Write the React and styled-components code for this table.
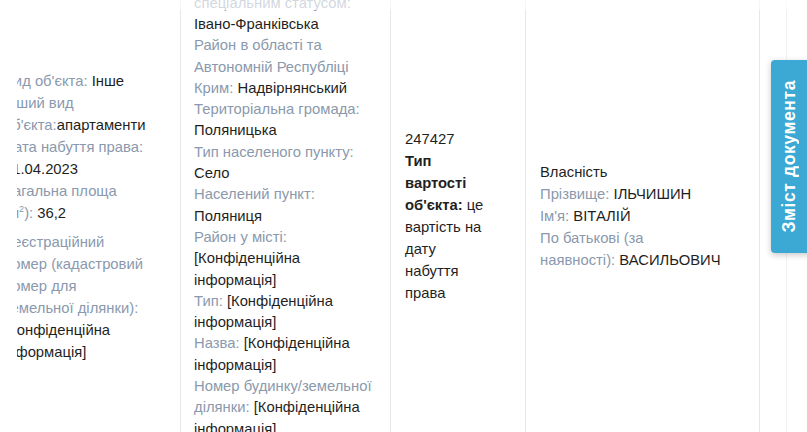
import React from 'react';
import styled, { createGlobalStyle } from 'styled-components';

const GlobalStyle = createGlobalStyle`
  html, body {
    margin: 0;
    padding: 0;
    background: #fff;
  }
  body {
    font-family: "Liberation Sans", Arial, sans-serif;
    color: #1f1f1f;
  }
`;

const Page = styled.div`
  position: relative;
  height: 432px;
  padding-left: 17px;
  display: flex;
  overflow: hidden;
  background: #fff;
`;

const Clip = styled.div`
  flex: 1;
  display: flex;
  justify-content: flex-end;
  align-items: center;
  padding-right: 20px;
  overflow: hidden;
`;

const Table = styled.div`
  flex-shrink: 0;
  display: grid;
  grid-template-columns: 190px 210px 135px 234px 27px;
  align-items: stretch;
`;

const Cell = styled.div`
  display: flex;
  flex-direction: column;
  justify-content: center;
  box-sizing: border-box;
  padding: ${p => p.$pad || '12px 13px'};
  border-right: 1px solid ${p => p.$line || '#e7e7e7'};
  font-size: 14.8px;
  line-height: ${p => p.$lh || '22px'};
`;

const Text = styled.div`
  width: ${p => p.$w}px;
`;

const Field = styled.div`
  margin-top: ${p => p.$gap || 0}px;
`;

const Label = styled.span`
  color: #8a99ad;
`;

const Value = styled.span`
  color: #1f1f1f;
`;

const Keep = styled.span`
  white-space: nowrap;
`;

const Strong = styled.b`
  font-weight: 700;
  color: #1f1f1f;
`;

const Sup = styled.sup`
  font-size: 9px;
  line-height: 0;
`;

const Fade = styled.div`
  position: absolute;
  top: 0;
  left: 0;
  right: 0;
  height: 10px;
  background: rgba(255, 255, 255, 0.62);
`;

const SideTab = styled.button`
  position: absolute;
  top: 60px;
  right: -6px;
  width: 42px;
  height: 193px;
  border: none;
  border-radius: 4px 0 0 4px;
  background: #3ba9d3;
  box-shadow: 0 2px 6px rgba(0, 0, 0, 0.22);
  color: #fff;
  font-family: "Liberation Sans", Arial, sans-serif;
  font-size: 17.5px;
  font-weight: 700;
  letter-spacing: 0.6px;
  padding: 0 6px 0 0;
  display: flex;
  align-items: center;
  justify-content: center;
  cursor: pointer;

  span {
    writing-mode: vertical-rl;
    transform: rotate(180deg);
    white-space: nowrap;
  }
`;

const confidential = '[Конфіденційна інформація]';

export default function App() {
  return (
    <>
      <GlobalStyle />
      <Page>
        <Clip>
          <Table>
            <Cell>
              <Text $w={141}>
                <Field><Label>Вид об'єкта:</Label> <Value>Інше</Value></Field>
                <Field><Label>Інший вид об'єкта:</Label><Value>апартаменти</Value></Field>
                <Field><Label>Дата набуття права:</Label> <Value>01.04.2023</Value></Field>
                <Field>
                  <Label>Загальна площа (м<Sup>2</Sup>):</Label> <Value>36,2</Value>
                </Field>
                <Field $gap={7}>
                  <Label>Реєстраційний номер (кадастровий номер для земельної ділянки):</Label>{' '}
                  <Value>{confidential}</Value>
                </Field>
              </Text>
            </Cell>

            <Cell $lh="21.3px" $pad="12px 13px 54px">
              <Text $w={183}>
                <Field>
                  <Label>Область/Автономна Республіка Крим/місто зі спеціальним статусом:</Label>{' '}
                  <Value>Івано-Франківська</Value>
                </Field>
                <Field>
                  <Label>Район в області та Автономній Республіці Крим:</Label>{' '}
                  <Value>Надвірнянський</Value>
                </Field>
                <Field><Label>Територіальна громада:</Label> <Value>Поляницька</Value></Field>
                <Field><Label>Тип населеного пункту:</Label> <Value>Село</Value></Field>
                <Field><Label>Населений пункт:</Label> <Value>Поляниця</Value></Field>
                <Field><Label>Район у місті:</Label> <Value>{confidential}</Value></Field>
                <Field><Label>Тип:</Label> <Value>{confidential}</Value></Field>
                <Field><Label>Назва:</Label> <Value>{confidential}</Value></Field>
                <Field>
                  <Label>Номер будинку/земельної ділянки:</Label> <Value>{confidential}</Value>
                </Field>
              </Text>
            </Cell>

            <Cell $pad="12px 14px">
              <Text $w={81}>
                <Field><Value>247427</Value></Field>
                <Field>
                  <Strong>Тип вартості об'єкта:</Strong> <Value>це вартість на дату набуття права</Value>
                </Field>
              </Text>
            </Cell>

            <Cell $pad="12px 14px">
              <Text $w={178}>
                <Field><Value>Власність</Value></Field>
                <Field><Label>Прізвище:</Label> <Value>ІЛЬЧИШИН</Value></Field>
                <Field><Label>Ім'я:</Label> <Value>ВІТАЛІЙ</Value></Field>
                <Field>
                  <Label>По батькові (за</Label>{' '}
                  <Keep><Label>наявності):</Label> <Value>ВАСИЛЬОВИЧ</Value></Keep>
                </Field>
              </Text>
            </Cell>

            <Cell $pad="0" $line="#f1f1f1" />
          </Table>
        </Clip>
        <Fade />
        <SideTab type="button">
          <span>Зміст документа</span>
        </SideTab>
      </Page>
    </>
  );
}
